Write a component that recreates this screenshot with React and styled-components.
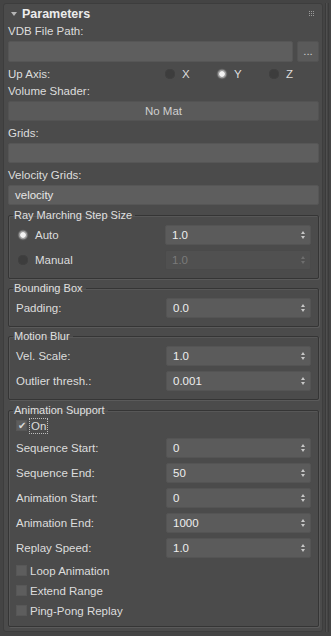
import React from "react"
import styled, { createGlobalStyle } from "styled-components"

const GlobalStyle = createGlobalStyle`
  html, body {
    margin: 0;
    padding: 0;
    background: #444444;
  }
  body {
    font-family: "Liberation Sans", Arial, sans-serif;
    font-size: 11.5px;
    color: #dddddd;
  }
`

const Page = styled.div`
  width: 331px;
  height: 636px;
  display: flex;
  box-sizing: border-box;
  padding: 3px 0 4px 3px;
  overflow: hidden;
`

const Rollout = styled.div`
  width: 320px;
  flex: none;
  background: #4b4b4b;
  border: 1px solid #3d3d3d;
  border-radius: 3px;
  display: flex;
  flex-direction: column;
  padding: 0 3px 0 4px;
  box-sizing: border-box;
`

const ScrollTrack = styled.div`
  flex: 1;
  margin-left: 2px;
  border-left: 1px solid #3a3a3a;
  box-shadow: inset 1px 0 0 #4e4e4e;
  display: flex;
  &::after {
    content: "";
    width: 1px;
    background: #3a3a3a;
    margin-left: 2px;
  }
`

const Header = styled.div`
  height: 20px;
  display: flex;
  align-items: center;
  gap: 5px;
  font-weight: bold;
  font-size: 12.5px;
  color: #ececec;
  padding-left: 3px;
`

const Triangle = styled.span`
  width: 0;
  height: 0;
  border-left: 3px solid transparent;
  border-right: 3px solid transparent;
  border-top: 4px solid #b5b5b5;
`

const Grip = styled.span`
  margin-left: auto;
  margin-right: 4px;
  width: 6px;
  height: 6px;
  background: radial-gradient(circle at 0.5px 0.5px, #9a9a9a 0.7px, transparent 0.9px) 0 0 / 2px 2px;
`

const Label = styled.div`
  height: 14px;
  line-height: 14px;
  margin-top: ${(p) => p.$top || 0}px;
  margin-bottom: 3px;
`

const Row = styled.div`
  display: flex;
  align-items: center;
  gap: ${(p) => p.$gap || 0}px;
  height: ${(p) => p.$h || 20}px;
  margin-top: ${(p) => p.$top || 0}px;
`

const TextField = styled.div`
  flex: ${(p) => (p.$grow ? 1 : "none")};
  height: ${(p) => p.$h || 20}px;
  line-height: ${(p) => (p.$h || 20) - 2}px;
  background: #5e5e5e;
  border: 1px solid #565656;
  border-radius: 2px;
  box-sizing: border-box;
  padding-left: 6px;
  color: #e6e6e6;
`

const Button = styled.div`
  height: ${(p) => p.$h || 20}px;
  line-height: ${(p) => (p.$h || 20) - 2}px;
  width: ${(p) => (p.$w ? p.$w + "px" : "auto")};
  flex: none;
  background: #5a5a5a;
  border: 1px solid #535353;
  border-radius: 2px;
  box-sizing: border-box;
  text-align: center;
  color: #cfcfcf;
`

const AxisLabel = styled.span`
  width: 157px;
  flex: none;
`

const RadioItem = styled.label`
  display: flex;
  align-items: center;
  gap: ${(p) => p.$gap || 7}px;
  width: ${(p) => (p.$w ? p.$w + "px" : "auto")};
  padding-left: ${(p) => p.$pad || 0}px;
  box-sizing: border-box;
  flex: none;
`

const RadioDot = styled.span`
  width: 10px;
  height: 10px;
  border-radius: 50%;
  flex: none;
  background: ${(p) =>
    p.$on
      ? "radial-gradient(circle, #f2f2f2 0 2.4px, #9a9a9a 3.2px 3.8px, #6c6c6c 4.6px)"
      : "#3d3d3d"};
  box-shadow: ${(p) => (p.$on ? "0 0 0 0.5px #575757" : "inset 0 0 0 1px #414141")};
`

const Group = styled.fieldset`
  margin: ${(p) => p.$top || 0}px 0 0 0;
  padding: ${(p) => p.$padTop ?? 3}px 7px 8px 6px;
  border: 1px solid #353535;
  border-radius: 2px;
  box-shadow: 1px 1px 0 #5a5a5a, inset 1px 1px 0 #575757;
  min-width: 0;
  display: flex;
  flex-direction: column;
  gap: 5px;
`

const Legend = styled.legend`
  padding: 0 3px 0 1px;
  margin-left: -2px;
  font-size: 11px;
  color: #e0e0e0;
  line-height: 13px;
`

const SpinRow = styled.div`
  display: flex;
  align-items: center;
  height: 20px;
`

const SpinLabel = styled.span`
  width: 150px;
  flex: none;
  padding-left: 1px;
`

const Spinner = styled.div`
  flex: 1;
  height: 20px;
  display: flex;
  align-items: center;
  justify-content: space-between;
  background: ${(p) => (p.$disabled ? "#505050" : "#5b5b5b")};
  border: 1px solid ${(p) => (p.$disabled ? "#4a4a4a" : "#545454")};
  border-radius: 2px;
  box-sizing: border-box;
  padding: 0 5px 0 6px;
  color: ${(p) => (p.$disabled ? "#7a7a7a" : "#eeeeee")};
`

const Arrows = styled.span`
  display: flex;
  flex-direction: column;
  gap: 2px;
  &::before,
  &::after {
    content: "";
    border-left: 2.5px solid transparent;
    border-right: 2.5px solid transparent;
  }
  &::before {
    border-bottom: 3px solid ${(p) => (p.$disabled ? "#6e6e6e" : "#c8c8c8")};
  }
  &::after {
    border-top: 3px solid ${(p) => (p.$disabled ? "#6e6e6e" : "#c8c8c8")};
  }
`

const CheckRow = styled.label`
  display: flex;
  align-items: center;
  gap: 3px;
  height: 15px;
`

const CheckBox = styled.span`
  width: 11px;
  height: 11px;
  flex: none;
  margin-left: 1px;
  background: #5d5d5d;
  border: 1px solid #575757;
  box-sizing: border-box;
  display: flex;
  align-items: center;
  justify-content: center;
  color: #d8d8d8;
  font-size: 10px;
  line-height: 1;
`

const Focus = styled.span`
  outline: 1px dotted #bdbdbd;
  padding: 0 1px;
  line-height: 14px;
`

function Spin({ label, value, disabled }) {
  return (
    <SpinRow>
      <SpinLabel>{label}</SpinLabel>
      <Spinner $disabled={disabled}>
        <span>{value}</span>
        <Arrows $disabled={disabled} />
      </Spinner>
    </SpinRow>
  )
}

function RadioSpin({ label, value, on, disabled }) {
  return (
    <SpinRow>
      <RadioItem $w={150} $pad={3} $gap={7}>
        <RadioDot $on={on} />
        {label}
      </RadioItem>
      <Spinner $disabled={disabled}>
        <span>{value}</span>
        <Arrows $disabled={disabled} />
      </Spinner>
    </SpinRow>
  )
}

function Check({ label, checked, focus }) {
  return (
    <CheckRow>
      <CheckBox>{checked ? "✔" : ""}</CheckBox>
      {focus ? <Focus>{label}</Focus> : <span>{label}</span>}
    </CheckRow>
  )
}

export default function App() {
  return (
    <>
      <GlobalStyle />
      <Page>
        <Rollout>
          <Header>
            <Triangle />
            <span>Parameters</span>
            <Grip />
          </Header>

          <Label>VDB File Path:</Label>
          <Row $gap={4} $h={21}>
            <TextField $grow $h={21} />
            <Button $w={22} $h={21}>...</Button>
          </Row>

          <Row $h={18} $top={3}>
            <AxisLabel>Up Axis:</AxisLabel>
            <RadioItem $w={52}>
              <RadioDot />X
            </RadioItem>
            <RadioItem $w={52}>
              <RadioDot $on />Y
            </RadioItem>
            <RadioItem>
              <RadioDot />Z
            </RadioItem>
          </Row>

          <Label $top={1}>Volume Shader:</Label>
          <Button>No Mat</Button>

          <Label $top={5}>Grids:</Label>
          <TextField />

          <Label $top={5}>Velocity Grids:</Label>
          <TextField>velocity</TextField>

          <Group $top={4}>
            <Legend>Ray Marching Step Size</Legend>
            <RadioSpin label="Auto" value="1.0" on />
            <RadioSpin label="Manual" value="1.0" disabled />
          </Group>

          <Group $top={3}>
            <Legend>Bounding Box</Legend>
            <Spin label="Padding:" value="0.0" />
          </Group>

          <Group $top={3}>
            <Legend>Motion Blur</Legend>
            <Spin label="Vel. Scale:" value="1.0" />
            <Spin label="Outlier thresh.:" value="0.001" />
          </Group>

          <Group $top={4} $padTop={1}>
            <Legend>Animation Support</Legend>
            <Check label="On" checked focus />
            <Spin label="Sequence Start:" value="0" />
            <Spin label="Sequence End:" value="50" />
            <Spin label="Animation Start:" value="0" />
            <Spin label="Animation End:" value="1000" />
            <Spin label="Replay Speed:" value="1.0" />
            <Check label="Loop Animation" />
            <Check label="Extend Range" />
            <Check label="Ping-Pong Replay" />
          </Group>
        </Rollout>
        <ScrollTrack />
      </Page>
    </>
  )
}
